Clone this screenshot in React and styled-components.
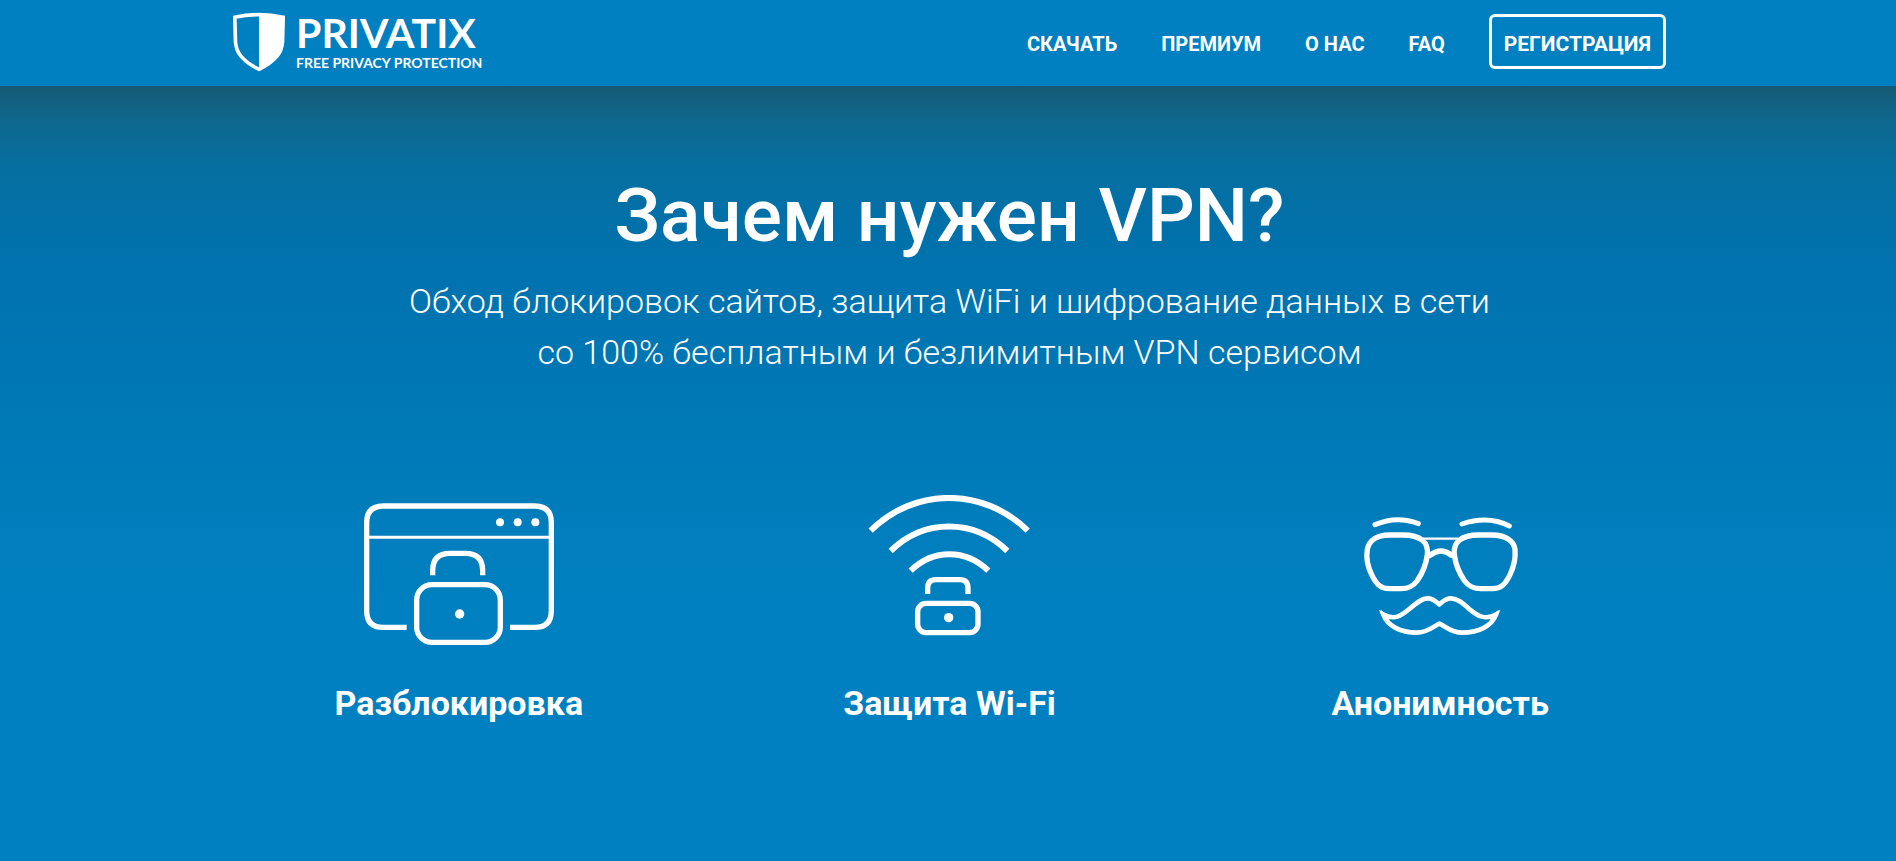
import React from "react";
import styled, { createGlobalStyle } from "styled-components";

const GlobalStyle = createGlobalStyle`
  *, *::before, *::after { box-sizing: border-box; }
  body {
    margin: 0;
    background: #0080c0;
    color: #fff;
    font-family: Roboto, "Liberation Sans", sans-serif;
  }
`;

const Page = styled.div`
  display: flex;
  flex-direction: column;
  min-height: 100vh;
`;

const Header = styled.header`
  background: #0080c0;
`;

const Bar = styled.div`
  display: flex;
  align-items: center;
  justify-content: space-between;
  max-width: 1472px;
  min-height: 86px;
  margin: 0 auto;
  padding: 0 18px 3px 20px;
`;

const Logo = styled.a`
  display: flex;
  align-items: center;
  gap: 10px;
  color: #fff;
  text-decoration: none;
`;

const Shield = styled.svg`
  width: 54px;
  height: 60px;
`;

const LogoText = styled.span`
  display: flex;
  flex-direction: column;
  font-family: Lato, "Open Sans", sans-serif;
  font-weight: 700;
`;

const Brand = styled.span`
  font-size: 41px;
  line-height: 42px;
`;

const Tagline = styled.span`
  font-size: 14px;
  line-height: 18px;
`;

const Nav = styled.nav`
  display: flex;
  align-items: baseline;
  gap: 44px;
`;

const NavLink = styled.a`
  color: #fff;
  font-size: 20px;
  line-height: 28px;
  font-weight: 700;
  text-decoration: none;
  text-transform: uppercase;
  white-space: nowrap;
`;

const SignUp = styled(NavLink)`
  padding: 13px 12px 8px;
  border: 3px solid #fff;
  border-radius: 6px;
  font-size: 21px;
`;

const Hero = styled.main`
  flex: 1;
  padding: 81px 15px 90px 18px;
  background: linear-gradient(
    to bottom,
    #165a75 0,
    #0e688f 36px,
    #066f9f 80px,
    #0270a8 130px,
    #0073b0 200px,
    #007ab8 360px,
    #0080c0 520px
  );
`;

const Title = styled.h1`
  margin: 0;
  font-size: 75px;
  line-height: 96px;
  font-weight: 500;
  text-align: center;
`;

const Lead = styled.p`
  margin: 13px 0 0;
  font-size: 34px;
  line-height: 51px;
  font-weight: 300;
  text-align: center;
`;

const Features = styled.ul`
  display: grid;
  grid-template-columns: repeat(3, 1fr);
  max-width: 1472px;
  margin: 117px auto 0;
  padding: 0;
  list-style: none;
`;

const Feature = styled.li`
  display: flex;
  flex-direction: column;
  align-items: center;
  gap: 36px;
`;

const FeatureIcon = styled.svg`
  width: 200px;
  height: 150px;
  fill: none;
  stroke: #fff;
  stroke-width: 16;
`;

const FeatureName = styled.h2`
  margin: 0;
  font-size: 34px;
  line-height: 44px;
  font-weight: 700;
`;

const UnblockIcon = () => (
  <FeatureIcon viewBox="117 45 600 450" aria-hidden="true">
    <path d="M260 442H190Q140 442 140 392V128Q140 78 190 78H644Q694 78 694 128V392Q694 442 644 442H570" />
    <path d="M147 172H687" strokeWidth="9" />
    <path d="M338 286V272Q338 220 390 220H436Q488 220 488 272V286" />
    <rect x="290" y="314" width="251" height="173" rx="46" />
    <g fill="#fff" stroke="none">
      <circle cx="540" cy="127" r="12" />
      <circle cx="593" cy="127" r="12" />
      <circle cx="646" cy="127" r="12" />
      <circle cx="419" cy="402" r="14" />
    </g>
  </FeatureIcon>
);

const WifiIcon = () => (
  <FeatureIcon viewBox="58 45 600 450" aria-hidden="true">
    <path d="M123 152C254 21 462 21 594 152M183 213C283 115 433 115 533 213M243 272C310 206 408 206 476 272" strokeWidth="18" />
    <path d="M294 342V324Q294 299 319 299H390Q415 299 415 324V342" />
    <rect x="264" y="370" width="181" height="88" rx="25" />
    <circle cx="357" cy="413" r="14" fill="#fff" stroke="none" />
  </FeatureIcon>
);

const DisguiseIcon = () => (
  <FeatureIcon viewBox="61 45 600 450" aria-hidden="true" strokeLinecap="round">
    <path d="M166 134Q232 106 296 131M427 132Q506 106 569 138" strokeWidth="15" />
    <path d="M210 165H250C304 165 327 188 323 224C319 257 307 282 292 303C276 324 260 326 244 326H208C184 326 171 314 157 286C142 256 139 231 143 208C148 183 170 165 210 165Z" />
    <path d="M517 165H477C423 165 400 188 404 224C408 257 420 282 435 303C451 324 467 326 483 326H519C543 326 556 314 570 286C585 256 588 231 586 208C583 183 557 165 517 165Z" />
    <path d="M331 226Q364 200 396 226" />
    <path d="M312 176H414" strokeWidth="7" />
    <path d="M191 404C204 438 242 458 291 458C325 458 341 439 359 431C379 439 393 458 428 458C478 458 516 438 529 404C496 421 474 408 450 388C431 371 414 355 394 355C377 355 369 365 359 373C349 365 341 355 324 355C305 355 288 371 268 388C244 408 224 421 191 404Z" strokeWidth="14" />
    <path d="M183 389L210 411L193 419ZM537 389L511 411L527 419Z" fill="#fff" stroke="none" />
  </FeatureIcon>
);

const NAV_ITEMS = ["Скачать", "Премиум", "О нас", "FAQ"];

const FEATURES = [
  { name: "Разблокировка", Icon: UnblockIcon },
  { name: "Защита Wi-Fi", Icon: WifiIcon },
  { name: "Анонимность", Icon: DisguiseIcon },
];

export default function App() {
  return (
    <Page>
      <GlobalStyle />
      <Header>
        <Bar>
          <Logo href="#">
            <Shield viewBox="38 38 160 181" aria-hidden="true">
              <path
                d="M45 54Q118 38 191 54L189 128Q187 154 172 172Q152 195 118 211Q84 195 64 172Q49 154 47 128Z"
                fill="none"
                stroke="#fff"
                strokeWidth="11"
              />
              <path d="M118 44Q160 44 192 54L189 128Q187 154 172 172Q152 195 118 211Z" fill="#fff" />
            </Shield>
            <LogoText>
              <Brand>PRIVATIX</Brand>
              <Tagline>FREE PRIVACY PROTECTION</Tagline>
            </LogoText>
          </Logo>
          <Nav>
            {NAV_ITEMS.map((item) => (
              <NavLink key={item} href="#">{item}</NavLink>
            ))}
            <SignUp href="#">Регистрация</SignUp>
          </Nav>
        </Bar>
      </Header>
      <Hero>
        <Title>Зачем нужен VPN?</Title>
        <Lead>
          Обход блокировок сайтов, защита WiFi и шифрование данных в сети
          <br />
          со 100% бесплатным и безлимитным VPN сервисом
        </Lead>
        <Features>
          {FEATURES.map(({ name, Icon }) => (
            <Feature key={name}>
              <Icon />
              <FeatureName>{name}</FeatureName>
            </Feature>
          ))}
        </Features>
      </Hero>
    </Page>
  );
}
